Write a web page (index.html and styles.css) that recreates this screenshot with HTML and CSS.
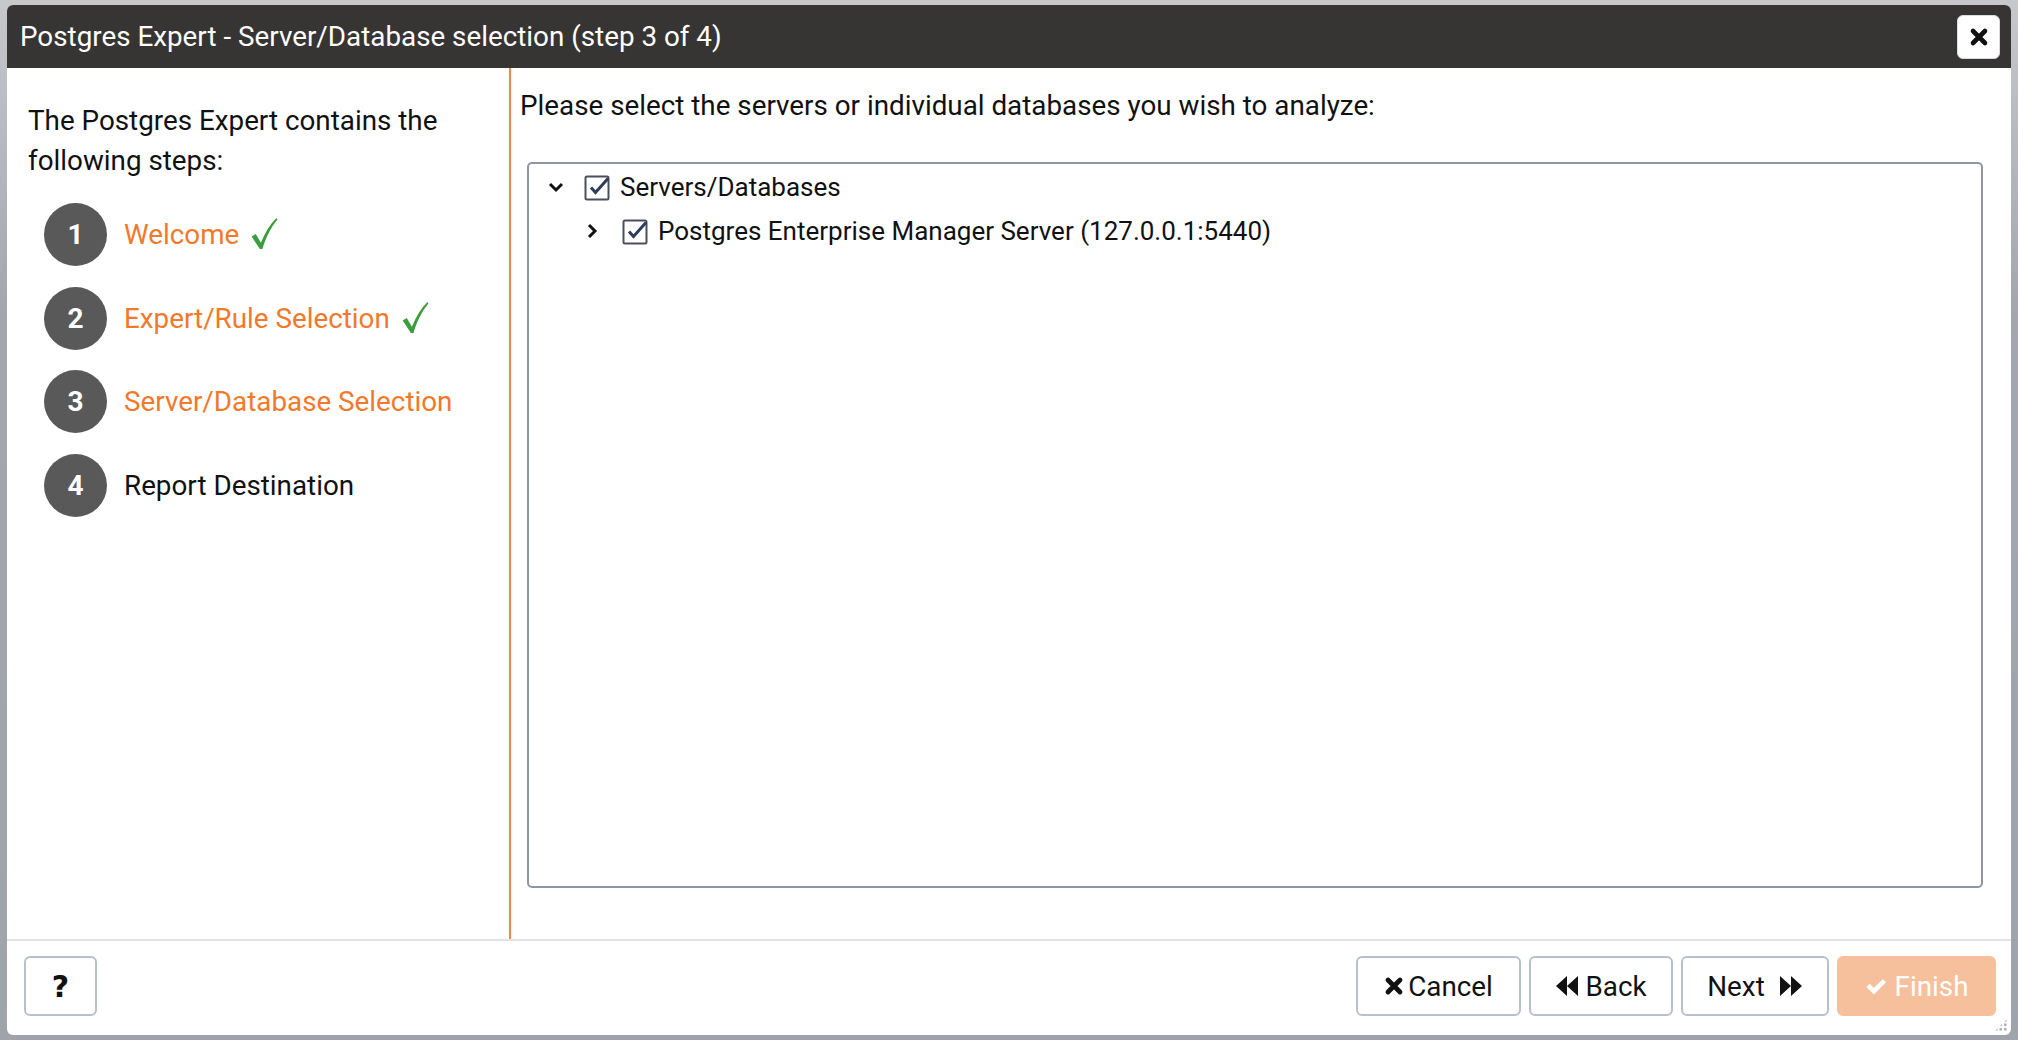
FILE: index.html
```html
<!DOCTYPE html>
<html>
<head>
<meta charset="utf-8">
<title>Postgres Expert</title>
<link rel="stylesheet" href="styles.css">
</head>
<body>
<div class="dialog">
  <div class="header">
    <div class="title">Postgres Expert - Server/Database selection (step 3 of 4)</div>
    <button class="close-btn" aria-label="Close">
      <svg width="20" height="20" viewBox="0 0 20 20"><path d="M4 4 L16 16 M16 4 L4 16" stroke="#111" stroke-width="4.6" stroke-linecap="round"/></svg>
    </button>
  </div>
  <div class="body">
    <div class="steps-panel">
      <p class="intro">The Postgres Expert contains the following steps:</p>
      <ol class="steps">
        <li class="step done"><span class="num">1</span><span class="label">Welcome</span>
          <svg class="tick" width="28" height="33" viewBox="0 0 26 32"><path d="M1 19 L5 16.5 L10 25 C14 15 19 7 25 1 L26 2.5 C20 10 15 19 11.5 31 L9 31 Z" fill="#3b9d3b"/></svg></li>
        <li class="step done"><span class="num">2</span><span class="label">Expert/Rule Selection</span>
          <svg class="tick" width="28" height="33" viewBox="0 0 26 32"><path d="M1 19 L5 16.5 L10 25 C14 15 19 7 25 1 L26 2.5 C20 10 15 19 11.5 31 L9 31 Z" fill="#3b9d3b"/></svg></li>
        <li class="step current"><span class="num">3</span><span class="label">Server/Database Selection</span></li>
        <li class="step"><span class="num">4</span><span class="label">Report Destination</span></li>
      </ol>
    </div>
    <div class="main-panel">
      <p class="prompt">Please select the servers or individual databases you wish to analyze:</p>
      <div class="tree">
        <div class="tree-row">
          <svg class="chev" width="18" height="18" viewBox="0 0 18 18"><path d="M3 6 L9 12 L15 6" fill="none" stroke="#111" stroke-width="3"/></svg>
          <svg class="cbox" width="27" height="27" viewBox="0 0 27 27"><rect x="1.5" y="2.5" width="23" height="23" rx="1.5" fill="#fff" stroke="#4a4f5a" stroke-width="2"/><path d="M7 13.5 L11.5 18.5 L24 4.5" fill="none" stroke="#2e3d5c" stroke-width="3"/></svg>
          <span class="node-text">Servers/Databases</span>
        </div>
        <div class="tree-row child">
          <svg class="chev" width="18" height="18" viewBox="0 0 18 18"><path d="M6 3 L12 9 L6 15" fill="none" stroke="#111" stroke-width="3"/></svg>
          <svg class="cbox" width="27" height="27" viewBox="0 0 27 27"><rect x="1.5" y="2.5" width="23" height="23" rx="1.5" fill="#fff" stroke="#4a4f5a" stroke-width="2"/><path d="M7 13.5 L11.5 18.5 L24 4.5" fill="none" stroke="#2e3d5c" stroke-width="3"/></svg>
          <span class="node-text">Postgres Enterprise Manager Server (127.0.0.1:5440)</span>
        </div>
      </div>
    </div>
  </div>
  <div class="footer">
    <button class="btn help-btn" aria-label="Help">?</button>
    <div class="actions">
      <button class="btn"><svg width="20" height="20" viewBox="0 0 20 20"><path d="M4 4 L16 16 M16 4 L4 16" stroke="#111" stroke-width="4.8" stroke-linecap="round"/></svg>Cancel</button>
      <button class="btn"><svg width="26" height="24" viewBox="0 0 26 24"><path d="M1 12 L12 2 V22 Z M12 12 L23 2 V22 Z" fill="#111"/></svg>Back</button>
      <button class="btn">Next<svg width="26" height="24" viewBox="0 0 26 24"><path d="M25 12 L14 2 V22 Z M14 12 L3 2 V22 Z" fill="#111"/></svg></button>
      <button class="btn finish" disabled><svg width="22" height="19" viewBox="0 0 20 18"><path d="M1 9.5 L4 6.5 L8 10.5 L16.5 2 L19.5 5 L8 16.5 Z" fill="#fff"/></svg>Finish</button>
    </div>
    <div class="grip"></div>
  </div>
</div>
</body>
</html>
```

FILE: styles.css
```css
* { box-sizing: border-box; }
html, body { margin: 0; height: 100%; }
body {
  background: linear-gradient(#c6c8cc, #a3a6ad 30%, #9fa3aa);
  padding: 5px 7px 5px 7px;
  font-family: Roboto, "Noto Sans", sans-serif;
}
.dialog {
  height: 1030px;
  background: #fff;
  border-radius: 6px;
  display: flex;
  flex-direction: column;
  overflow: hidden;
  position: relative;
}
.header {
  height: 63px;
  background: #373434;
  display: flex;
  align-items: center;
  justify-content: space-between;
  padding: 0 11px 0 13px;
  flex: none;
}
.title {
  color: #fff;
  font-size: 27.8px;
}
.close-btn {
  width: 43px;
  height: 44px;
  background: #fff;
  border: 1px solid #d8dbe0;
  border-radius: 6px;
  display: flex;
  align-items: center;
  justify-content: center;
  padding: 0;
  margin-top: 1px;
}
.body {
  flex: 1;
  display: flex;
  min-height: 0;
}
.steps-panel {
  width: 504px;
  border-right: 2px solid #f0874f;
  padding: 33px 0 0 21px;
  flex: none;
}
.intro {
  margin: 0;
  font-size: 27.8px;
  line-height: 40px;
  color: #111;
  width: 450px;
}
.steps {
  list-style: none;
  margin: 22px 0 0 16px;
  padding: 0;
  display: flex;
  flex-direction: column;
  gap: 20.5px;
}
.step {
  display: flex;
  align-items: center;
  height: 63px;
  font-size: 27.8px;
  color: #111;
}
.num {
  width: 63px;
  height: 63px;
  border-radius: 50%;
  background: #595959;
  color: #fff;
  font-weight: bold;
  font-size: 28px;
  display: flex;
  align-items: center;
  justify-content: center;
  margin-right: 17px;
  flex: none;
}
.step.done .label, .step.current .label { color: #f07a2a; }
.tick { margin-left: 11px; margin-top: -2px; }
.main-panel {
  flex: 1;
  padding: 19px 28px 51px 16px;
  display: flex;
  flex-direction: column;
}
.prompt {
  margin: 0 0 0 -7px;
  font-size: 27.8px;
  line-height: 38px;
  color: #111;
}
.tree {
  margin-top: 37px;
  flex: 1;
  border: 2px solid #8f96a3;
  border-radius: 5px;
  padding: 1px 0 0 0;
}
.tree-row {
  display: flex;
  align-items: center;
  height: 44px;
  padding-left: 18px;
  font-size: 26px;
  color: #111;
}
.tree-row.child { padding-left: 58px; }
.chev { margin-right: 19px; flex: none; }
.tree-row.child .chev { margin-right: 21px; margin-left: -4px; }
.cbox { margin-right: 9px; flex: none; }
.footer {
  height: 96px;
  border-top: 2px solid #dfe2e8;
  display: flex;
  align-items: flex-start;
  justify-content: space-between;
  padding: 15px 15px 0 17px;
  flex: none;
  position: relative;
}
.btn {
  height: 60px;
  background: #fff;
  border: 2px solid #b8c0cc;
  border-radius: 6px;
  font-family: Roboto, "Noto Sans", sans-serif;
  font-size: 27.8px;
  color: #111;
  display: flex;
  align-items: center;
  justify-content: center;
  gap: 4px;
  padding: 0 12px;
}
.help-btn {
  width: 73px;
  font-weight: 900;
  font-size: 30px;
  font-family: "DejaVu Sans", sans-serif;
}
.actions { display: flex; gap: 8px; }
.actions .btn:nth-child(1) { width: 165px; }
.actions .btn:nth-child(2) { width: 144px; }
.actions .btn:nth-child(3) { width: 148px; gap: 12px; }
.finish {
  width: 159px;
  background: #f7c09c;
  border-color: #f7c09c;
  color: #fff;
  gap: 8px;
}
.grip {
  position: absolute;
  right: 3px;
  bottom: 3px;
  width: 14px;
  height: 14px;
  background-image: radial-gradient(circle, #aab0b8 1.2px, transparent 1.6px);
  background-size: 4.5px 4.5px;
  clip-path: polygon(100% 0, 100% 100%, 0 100%);
}
```
